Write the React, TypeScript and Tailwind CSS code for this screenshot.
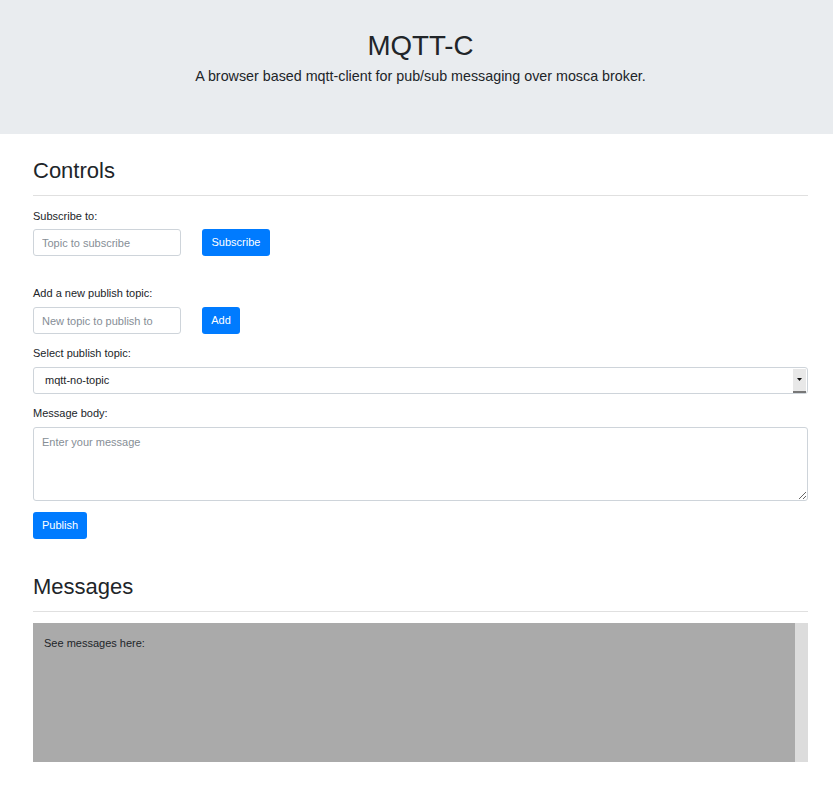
import React from "react";

const font = { fontFamily: '"Liberation Sans", Arial, sans-serif' };

function Label({ children }: any) {
  return <label className="block text-[11px] leading-[14px] text-[#212529]">{children}</label>;
}

function Button({ children, w }: any) {
  return (
    <button className={`h-[27px] ${w} rounded-[3px] bg-[#007bff] text-[11px] text-white`}>{children}</button>
  );
}

export default function App() {
  return (
    <div className="min-h-[792px] bg-white text-[#212529]" style={font}>
      <header className="h-[134px] bg-[#e9ecef] pl-[8px] pt-[30px] text-center">
        <h1 className="text-[27.7px] leading-[32px] text-[#212529]">MQTT-C</h1>
        <p className="mt-[4px] text-[14.3px] leading-[20px]">
          A browser based mqtt-client for pub/sub messaging over mosca broker.
        </p>
      </header>

      <main className="ml-[33px] w-[775px]">
        <h2 className="mt-[24px] text-[22px] leading-[26px]">Controls</h2>
        <hr className="mt-[11px] border-[#e0e0e0]" />

        <div className="mt-[13px]">
          <Label>Subscribe to:</Label>
          <div className="mt-[6px] flex gap-[21px]">
            <input
              className="h-[27px] w-[148px] rounded-[3px] border border-[#ced4da] px-[8px] text-[11px] placeholder:text-[#868e96]"
              placeholder="Topic to subscribe"
            />
            <Button w="w-[68px]">Subscribe</Button>
          </div>
        </div>

        <div className="mt-[30px]">
          <Label>Add a new publish topic:</Label>
          <div className="mt-[7px] flex gap-[21px]">
            <input
              className="h-[27px] w-[148px] rounded-[3px] border border-[#ced4da] px-[8px] text-[11px] placeholder:text-[#868e96]"
              placeholder="New topic to publish to"
            />
            <Button w="w-[38px]">Add</Button>
          </div>
        </div>

        <div className="mt-[12px]">
          <Label>Select publish topic:</Label>
          <div className="mt-[7px] flex h-[27px] items-center rounded-[3px] border border-[#ced4da] pl-[11px] pr-[1px] text-[11px]">
            <span className="flex-1">mqtt-no-topic</span>
            <span className="flex h-[24px] w-[13px] items-center justify-center border-b-2 border-[#777] bg-[#e8e8e8]">
              <svg width="5" height="3" viewBox="0 0 5 3">
                <path d="M0 0h5L2.5 3z" fill="#111" />
              </svg>
            </span>
          </div>
        </div>

        <div className="mt-[12px]">
          <Label>Message body:</Label>
          <textarea
            className="mt-[7px] block h-[74px] w-full resize-y rounded-[3px] border border-[#ced4da] px-[8px] py-[6px] text-[11px] placeholder:text-[#868e96]"
            placeholder="Enter your message"
          />
        </div>

        <div className="mt-[11px]">
          <Button w="w-[54px]">Publish</Button>
        </div>

        <h2 className="mt-[35px] text-[22px] leading-[26px]">Messages</h2>
        <hr className="mt-[11px] border-[#e0e0e0]" />

        <div className="mt-[11px] flex h-[139px]">
          <div className="flex-1 bg-[#aaaaaa] px-[11px] pt-[12px] text-[11px] text-[#212529]">
            See messages here:
          </div>
          <div className="w-[13px] bg-[#dcdcdc]" />
        </div>
      </main>
    </div>
  );
}
